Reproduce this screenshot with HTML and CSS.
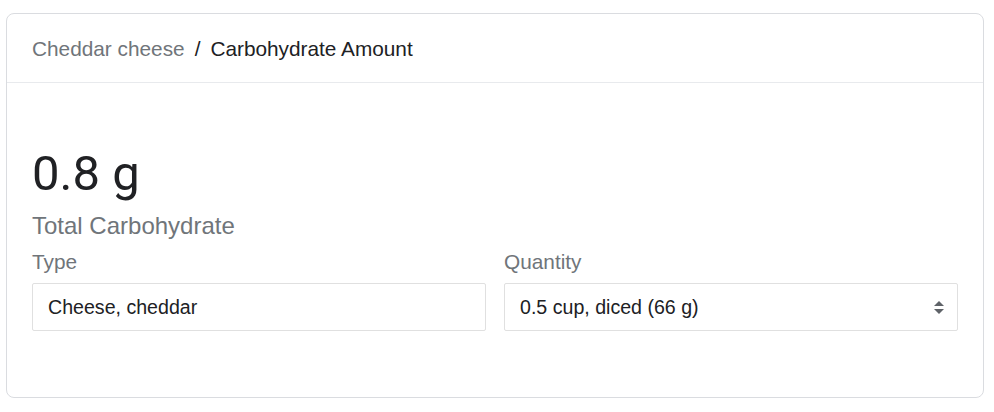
FILE: index.html
```html
<!DOCTYPE html>
<html>
<head>
<meta charset="utf-8">
<link rel="stylesheet" href="styles.css">
</head>
<body>
<div class="card">
  <div class="header">
    <span class="crumb-parent">Cheddar cheese</span>
    <span class="crumb-sep">/</span>
    <span class="crumb-current">Carbohydrate Amount</span>
  </div>
  <div class="content">
    <div class="value">0.8 g</div>
    <div class="caption">Total Carbohydrate</div>
    <div class="fields">
      <div class="field">
        <div class="label">Type</div>
        <div class="box">Cheese, cheddar</div>
      </div>
      <div class="field">
        <div class="label">Quantity</div>
        <div class="box select">
          <span>0.5 cup, diced (66 g)</span>
          <svg class="arrows" width="12" height="18" viewBox="0 0 12 18">
            <path d="M1 8 L6 3 L11 8 Z" fill="#5f6368"/>
            <path d="M1 11 L6 16 L11 11 Z" fill="#5f6368"/>
          </svg>
        </div>
      </div>
    </div>
  </div>
</div>
</body>
</html>
```
FILE: styles.css
```css
html, body {
  margin: 0;
  padding: 0;
  background: #fff;
}
body {
  padding: 13px 10px 0 6px;
  font-family: "Liberation Sans", Arial, sans-serif;
  color: #202124;
}
.card {
  width: 976px;
  border: 1px solid #dadce0;
  border-radius: 8px;
  box-sizing: content-box;
}
.header {
  border-bottom: 1px solid #e8eaed;
  padding: 1px 25px 0 25px;
  box-sizing: border-box;
  height: 69px;
  display: flex;
  align-items: center;
  font-size: 20.8px;
  line-height: 24px;
  gap: 10px;
}
.crumb-parent {
  color: #70757a;
}
.crumb-sep, .crumb-current {
  color: #202124;
}
.content {
  padding: 63px 25px 66px 25px;
}
.value {
  font-family: Roboto, "Liberation Sans", sans-serif;
  font-size: 49px;
  line-height: 56px;
  color: #202124;
}
.caption {
  margin-top: 10px;
  font-size: 24px;
  line-height: 28px;
  color: #70757a;
}
.fields {
  margin-top: 10px;
  display: grid;
  grid-template-columns: 1fr 1fr;
  column-gap: 18px;
}
.label {
  font-size: 20.8px;
  line-height: 24px;
  color: #70757a;
  margin-bottom: 9px;
}
.box {
  height: 46px;
  border: 1px solid #e0e0e0;
  border-radius: 2px;
  padding: 0 15px;
  display: flex;
  align-items: center;
  font-size: 19.6px;
  color: #202124;
}
.select {
  justify-content: space-between;
  padding-right: 12px;
}
.arrows {
  display: block;
}
```
